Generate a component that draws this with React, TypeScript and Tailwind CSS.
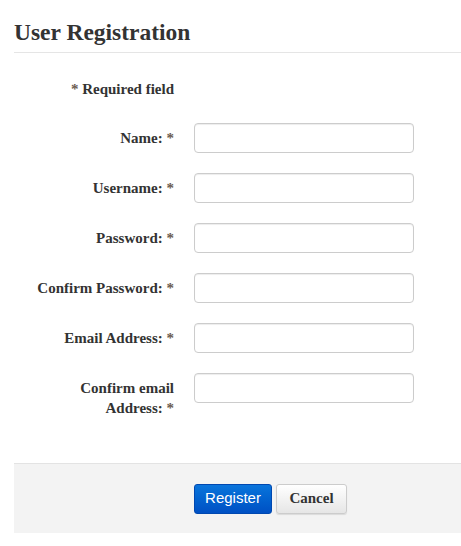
import React from 'react';

const fields = [
  { label: ['Name:'], type: 'text' },
  { label: ['Username:'], type: 'text' },
  { label: ['Password:'], type: 'password' },
  { label: ['Confirm Password:'], type: 'password' },
  { label: ['Email Address:'], type: 'email' },
  { label: ['Confirm email', 'Address:'], type: 'email' },
];

const serif = "font-['Liberation_Serif','DejaVu_Serif',serif]";

export default function App() {
  return (
    <div className={`w-[461px] h-[546px] bg-white pl-[14px] pt-[18px] text-[#333] ${serif}`}>
      <h1 className="text-[23.5px] font-bold leading-[28px] text-[#333] pb-[6px] border-b border-[#e5e5e5]">
        User Registration
      </h1>

      <div className="pt-[27px]">
        <div className="w-[160px] text-right text-[15px] font-bold leading-[18px]">
          <span className="text-[#6b5b50]">*</span> Required field
        </div>

        <div className="mt-[25px] flex flex-col gap-[20px]">
          {fields.map((f) => (
            <div key={f.label.join(' ')} className="flex items-start">
              <label className="w-[160px] text-right text-[15px] font-bold leading-[20px] pt-[5px]">
                {f.label.length > 1 ? (
                  <>
                    {f.label[0]}
                    <br />
                    {f.label[1]} <span className="text-[#6b5b50]">*</span>
                  </>
                ) : (
                  <>
                    {f.label[0]} <span className="text-[#6b5b50]">*</span>
                  </>
                )}
              </label>
              <input
                type={f.type}
                className="ml-[20px] w-[220px] h-[30px] rounded-[4px] border border-[#ccc] bg-white shadow-[inset_0_1px_1px_rgba(0,0,0,0.075)] outline-none"
              />
            </div>
          ))}
        </div>
      </div>

      <div className="mt-[45px] h-[70px] bg-[#f3f3f3] border-t border-[#e3e3e3] flex items-center pl-[180px] gap-[4px]">
        <button className="w-[78px] h-[30px] rounded-[3px] border border-[#0048b0] bg-gradient-to-b from-[#0a74db] to-[#0050c4] text-white text-[15px] font-['Liberation_Sans',Arial,sans-serif]">
          Register
        </button>
        <button className={`w-[71px] h-[30px] rounded-[3px] border border-[#ccc] bg-gradient-to-b from-white to-[#e6e6e6] text-[#333] text-[15px] font-bold shadow-[0_1px_1px_rgba(0,0,0,0.1)] ${serif}`}>
          Cancel
        </button>
      </div>
    </div>
  );
}
